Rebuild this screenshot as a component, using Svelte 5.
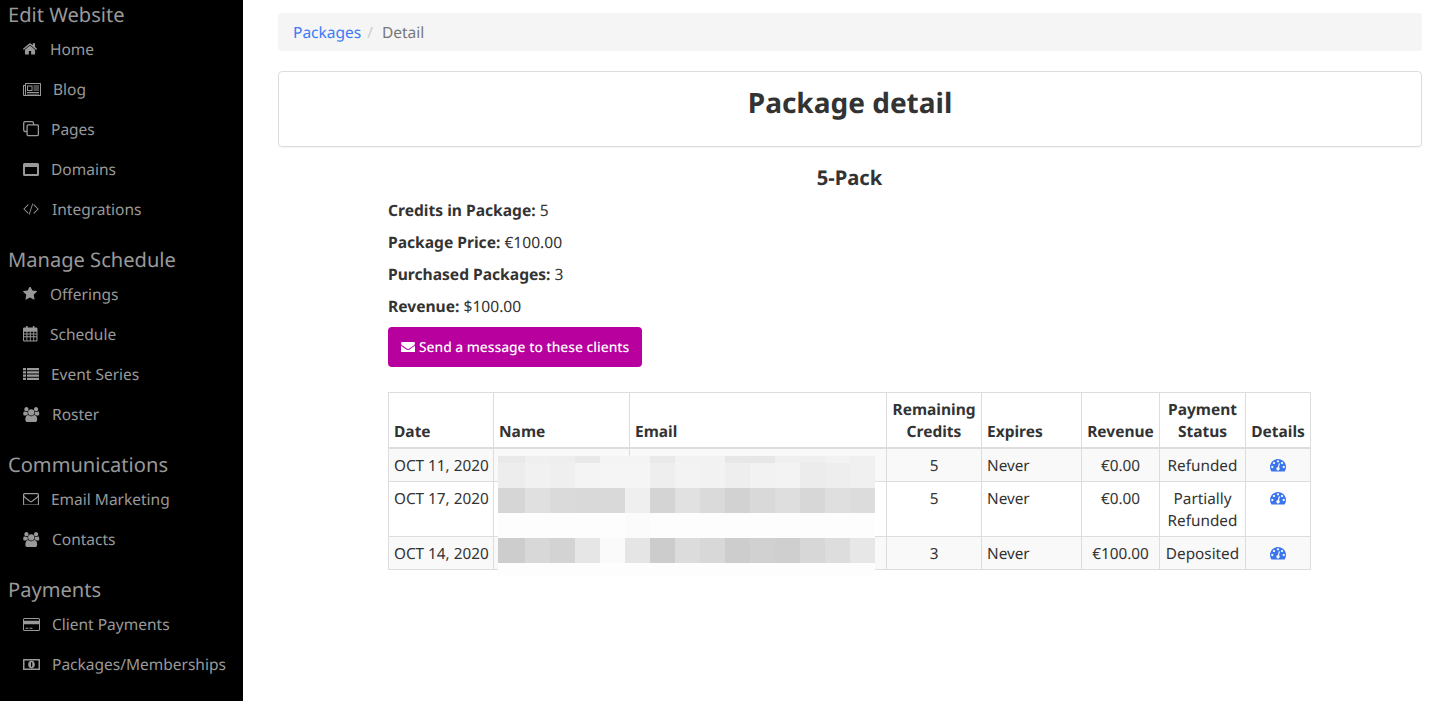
<script>
  const home = "M1472 992v480q0 26-19 45t-45 19h-384v-384h-256v384h-384q-26 0-45-19t-19-45v-480q0-1 .5-3t.5-3l575-474 575 474q1 2 1 6zm223-69l-62 74q-8 9-21 11h-3q-13 0-21-7l-692-577-692 577q-12 8-24 7-13-2-21-11l-62-74q-8-10-7-23.5t11-21.5l719-599q32-26 76-26t76 26l244 204v-195q0-14 9-23t23-9h192q14 0 23 9t9 23v408l219 182q10 8 11 21.5t-7 23.5z";
  const star = "M1728 647q0 22-26 48l-363 354 86 500q1 7 1 20 0 21-10.500 35.500t-30.500 14.500q-19 0-40-12l-449-236-449 236q-22 12-40 12-21 0-31.500-14.500t-10.500-35.500q0-6 2-20l86-500-364-354q-25-27-25-48 0-37 56-46l502-73 225-455q19-41 49-41t49 41l225 455 502 73q56 9 56 46z";
  const envelope = "M1792 710v794q0 66-47 113t-113 47h-1472q-66 0-113-47t-47-113v-794q44 49 101 87 362 246 497 345 57 42 92.500 65.500t94.500 48 110 24.500h2q51 0 110-24.500t94.500-48 92.500-65.500q170-123 498-345 57-39 100-87zm0-294q0 79-49 151t-122 123q-376 261-468 325-10 7-42.500 30.500t-54 38-52 32.500-57.500 27-50 9h-2q-23 0-50-9t-57.500-27-52-32.500-54-38-42.500-30.500q-91-64-262-182.500t-205-142.500q-62-42-117-115.500t-55-136.500q0-78 41.500-130t118.500-52h1472q65 0 112.500 47t47.500 113z";
  const envelopeO = "M1664 1504v-768q-32 36-69 66-268 206-426 338-51 43-83 67t-86.500 48.500-102.500 24.500h-2q-48 0-102.500-24.500t-86.500-48.500-83-67q-158-132-426-338-37-30-69-66v768q0 13 9.500 22.500t22.500 9.500h1472q13 0 22.500-9.500t9.500-22.500zm0-1051v-24.500l-.5-13-3-12.500-5.500-9-9-7.500-14-2.500h-1472q-13 0-22.500 9.500t-9.500 22.500q0 168 147 284 193 152 401 317 6 5 35 29.500t46 37.500 44.500 31.500 50.500 27.500 43 9h2q20 0 43-9t50.500-27.500 44.500-31.500 46-37.500 35-29.500q208-165 401-317 54-43 100.500-115.500t46.500-131.500zm128-37v1088q0 66-47 113t-113 47h-1472q-66 0-113-47t-47-113v-1088q0-66 47-113t113-47h1472q66 0 113 47t47 113z";
  const users = "M593 896q-162 5-265 128h-134q-82 0-138-40.500t-56-118.500q0-353 124-353 6 0 43.500 21t97.500 42.500 119 21.500q67 0 133-23-5 37-5 66 0 139 81 256zm1071 637q0 120-73 189.500t-194 69.500h-874q-121 0-194-69.500t-73-189.500q0-53 3.500-103.500t14-109 26.500-108.500 43-97.500 62-81 85.500-53.500 111.500-20q10 0 43 21.500t73 48 107 48 135 21.500 135-21.500 107-48 73-48 43-21.500q61 0 111.500 20t85.500 53.500 62 81 43 97.500 26.500 108.500 14 109 3.500 103.500zm-1024-1277q0 106-75 181t-181 75-181-75-75-181 75-181 181-75 181 75 75 181zm704 384q0 159-112.500 271.500t-271.500 112.500-271.500-112.500-112.500-271.500 112.500-271.500 271.500-112.500 271.500 112.500 112.500 271.500zm576 225q0 78-56 118.500t-138 40.500h-134q-103-123-265-128 81-117 81-256 0-29-5-66 66 23 133 23 59 0 119-21.500t97.500-42.500 43.500-21q124 0 124 353zm-128-609q0 106-75 181t-181 75-181-75-75-181 75-181 181-75 181 75 75 181z";
  const dashboard = "M384 1152q0-53-37.500-90.500t-90.500-37.500-90.500 37.500-37.500 90.500 37.500 90.500 90.500 37.500 90.500-37.500 37.500-90.500zm192-448q0-53-37.500-90.500t-90.500-37.500-90.500 37.500-37.500 90.500 37.500 90.500 90.500 37.500 90.500-37.500 37.500-90.500zm428 481l101-382q6-26-7.500-48.500t-38.500-29.500-48 6.500-30 39.500l-101 382q-60 5-107 43.500t-63 98.500q-20 77 20 146t117 89 146-20 89-117q16-60-6-117t-72-91zm660-33q0-53-37.500-90.500t-90.500-37.500-90.500 37.500-37.500 90.500 37.500 90.500 90.500 37.500 90.500-37.500 37.500-90.500zm-640-640q0-53-37.500-90.500t-90.500-37.500-90.500 37.500-37.500 90.500 37.500 90.500 90.500 37.500 90.500-37.500 37.500-90.500zm448 192q0-53-37.500-90.500t-90.500-37.500-90.500 37.500-37.500 90.500 37.500 90.500 90.500 37.500 90.500-37.500 37.500-90.500zm320 448q0 261-141 483-19 29-54 29h-1402q-35 0-54-29-141-221-141-483 0-182 71-348t191-286 286-191 348-71 348 71 286 191 191 286 71 348z";

  const paper = "M2.500 0h15a.5.5 0 0 1 .5.5v12a.5.5 0 0 1-.5.5H1.200A1.200 1.200 0 0 1 0 11.800V2h2V.5a.5.5 0 0 1 .5-.5zM3 1v10.500a1 1 0 0 1-.3.5H17V1zM1 3v8.800a.3.3 0 0 0 .6 0L2 11.500V3zM4 2.500h5.500V8H4zM5 3.500V7h3.500V3.500zM10.500 2.500h5.500v1h-5.500zM10.500 4.500h5.500v1h-5.500zM10.500 6.500h5.500v1h-5.500zM4 9h12v1H4zM4 10.700h12v.8H4z";
  const copyS = "M10.500 3.500V2A1.400 1.400 0 0 0 9.100.7H2A1.400 1.400 0 0 0 .7 2v7.100A1.400 1.400 0 0 0 2 10.500h1.500M5.400 3.800h8.700a1.300 1.300 0 0 1 1.300 1.300v8.300a1.300 1.300 0 0 1-1.300 1.300H5.400a1.300 1.300 0 0 1-1.300-1.300V5.100a1.300 1.300 0 0 1 1.300-1.300z";
  const windowMax = "M1.500 0h13A1.500 1.500 0 0 1 16 1.500v10a1.500 1.500 0 0 1-1.500 1.500h-13A1.500 1.500 0 0 1 0 11.500v-10A1.500 1.500 0 0 1 1.500 0zM2 4v7h12V4z";
  const code = "M5 1.300.3 6 5 10.700l.6-.6L1.500 6l4.100-4.100zM9.300.5 5.800 11.500l.8.3L10.100.7zM11 1.300l-.6.6L14.500 6l-4.100 4.100.6.6L15.700 6z";
  const calendar = "M3 0h1.500v1.500h5V0H11v1.500h1.800A1.200 1.200 0 0 1 14 2.700v11.100a1.200 1.200 0 0 1-1.200 1.200H1.200A1.200 1.200 0 0 1 0 13.800V2.700a1.200 1.200 0 0 1 1.200-1.200H3zM1 5.500V7.300h2.300V5.500zM4.200 5.500V7.300h2.400V5.500zM7.500 5.500V7.300h2.400V5.500zM10.800 5.500V7.300H13V5.500zM1 8.200V10h2.300V8.200zM4.200 8.200V10h2.400V8.200zM7.500 8.200V10h2.400V8.200zM10.800 8.200V10H13V8.200zM1 11v2.300c0 .4.3.7.7.7h1.600v-3zM4.200 11v3h2.400v-3zM7.500 11v3h2.400v-3zM10.800 11v3h1.500c.4 0 .7-.3.7-.7V11z";
  const list = "M0 0h3v2.200H0zM4 0h12v2.200H4zM0 3.300h3v2.200H0zM4 3.300h12v2.200H4zM0 6.600h3v2.200H0zM4 6.600h12v2.200H4zM0 9.800h3V12H0zM4 9.800h12V12H4z";
  const card = "M1.500 0h14A1.500 1.500 0 0 1 17 1.500v10a1.500 1.500 0 0 1-1.500 1.500h-14A1.500 1.500 0 0 1 0 11.500v-10A1.500 1.500 0 0 1 1.500 0zM1 6.300v5.200a.5.5 0 0 0 .5.5h14a.5.5 0 0 0 .5-.5V6.300zM1 1.500V2.800h15V1.500a.5.5 0 0 0-.5-.5h-14a.5.5 0 0 0-.5.5zM2.500 9.700h3v1h-3zM6.500 9.700h3v1h-3z";
  const money = "M.5 0h16a.5.5 0 0 1 .5.5v10a.5.5 0 0 1-.5.5H.5a.5.5 0 0 1-.5-.5V.5A.5.5 0 0 1 .5 0zM1.500 1.500v8h14v-8zM8.500 1.700a3.300 3.800 0 1 0 0 7.600 3.300 3.800 0 0 0 0-7.600zM8 3.300h1.200v4.400H8z";

  const sections = [
    { title: "Edit Website", items: [
      { label: "Home", d: home, vb: "97 230 1600 1310", w: 14, h: 11.5, t: 27 },
      { label: "Blog", d: paper, vb: "0 0 18 13", w: 18, h: 13, t: 30 },
      { label: "Pages", s: copyS, vb: "0 0 16 15.500", w: 16, h: 15.5, t: 28 },
      { label: "Domains", d: windowMax, vb: "0 0 16 13", w: 16, h: 13, t: 28 },
      { label: "Integrations", d: code, vb: "0 0 16 12", w: 16, h: 12, t: 29 }
    ]},
    { title: "Manage Schedule", items: [
      { label: "Offerings", d: star, vb: "64 120 1664 1600", w: 14, h: 13.5, t: 27 },
      { label: "Schedule", d: calendar, vb: "0 0 14 15", w: 14.5, h: 15.5, t: 27 },
      { label: "Event Series", d: list, vb: "0 0 16 12", w: 16, h: 12, t: 28 },
      { label: "Roster", d: users, vb: "0 0 1920 1792", w: 16.5, h: 15, t: 29 }
    ]},
    { title: "Communications", items: [
      { label: "Email Marketing", d: envelopeO, vb: "0 256 1792 1280", w: 16, h: 11.5, t: 28 },
      { label: "Contacts", d: users, vb: "0 0 1920 1792", w: 16.5, h: 15, t: 29 }
    ]},
    { title: "Payments", items: [
      { label: "Client Payments", d: card, vb: "0 0 17 13", w: 17, h: 13, t: 29 },
      { label: "Packages/Memberships", d: money, vb: "0 0 17 11", w: 17, h: 11, t: 29 }
    ]}
  ];

  const rows = [
    { date: "OCT 11, 2020", credits: 5, revenue: "€0.00", status: ["Refunded"] },
    { date: "OCT 17, 2020", credits: 5, revenue: "€0.00", status: ["Partially", "Refunded"] },
    { date: "OCT 14, 2020", credits: 3, revenue: "€100.00", status: ["Deposited"] }
  ];

  const mosaic = [
    { h: 7, c: ["e9e9e9","efefef","eeeeee","e8e8e8","f3f3f3","f4f4f4","e9e9e9","f2f2f2","f2f2f2","e7e7e7","e7e7e7","f0f0f0","efefef","f2f2f2","f0f0f0"] },
    { h: 25, c: ["ededed","f1f1f1","efefef","f4f4f4","f5f5f5","f5f5f5","eeeeee","f3f3f3","f2f2f2","eeeeee","f2f2f2","f3f3f3","ececec","eeeeee","f0f0f0"] },
    { h: 25, c: ["d6d6d6","e0e0e0","dadada","d9d9d9","d9d9d9","efefef","d4d4d4","e1e1e1","dadada","d2d2d2","d9d9d9","dedede","d7d7d7","dfdfdf","dcdcdc"] },
    { h: 25, c: ["fdfdfd","fdfdfd","fdfdfd","fdfdfd","fdfdfd","fbfbfb","fdfdfd","fdfdfd","fdfdfd","fdfdfd","fdfdfd","fdfdfd","fdfdfd","fdfdfd","fdfdfd"] },
    { h: 25, c: ["cdcdcd","d8d8d8","d3d3d3","e6e6e6","fafafa","e5e5e5","cccccc","dcdcdc","d8d8d8","cdcdcd","d1d1d1","cfcfcf","d7d7d7","dddddd","e7e7e7"] },
    { h: 12, c: Array(15).fill("fdfdfd") }
  ];
</script>

<div class="app">
  <nav class="side">
    {#each sections as sec}
      <section class="sec">
        <h3>{sec.title}</h3>
        {#each sec.items as it}
          <a class="item" href="#top">
            <span class="ico" style:width="{it.t}px">
              <svg width={it.w} height={it.h} viewBox={it.vb} fill="currentColor" fill-rule="evenodd">
                {#if it.s}
                  <path d={it.s} fill="none" stroke="currentColor" stroke-width="1.300" />
                {:else}
                  <path d={it.d} />
                {/if}
              </svg>
            </span>{it.label}
          </a>
        {/each}
      </section>
    {/each}
  </nav>

  <main class="main">
    <div class="crumb">
      <a href="#top">Packages</a><span class="sep">/</span><span class="cur">Detail</span>
    </div>
    <div class="card"><h1>Package detail</h1></div>
    <div class="inner">
      <h2>5-Pack</h2>
      <p><b>Credits in Package:</b> 5</p>
      <p><b>Package Price:</b> €100.00</p>
      <p><b>Purchased Packages:</b> 3</p>
      <p><b>Revenue:</b> $100.00</p>
      <button class="send">
        <svg width="14" height="10" viewBox="0 256 1792 1280" fill="currentColor"><path d={envelope} /></svg>
        <span class="sendtext">Send a message to these clients</span>
      </button>

      <div class="tablewrap">
        <table>
          <colgroup>
            <col class="c1" /><col class="c2" /><col class="c3" /><col class="c4" />
            <col class="c5" /><col class="c6" /><col class="c7" /><col class="c8" />
          </colgroup>
          <thead>
            <tr>
              <th>Date</th><th>Name</th><th>Email</th>
              <th class="ctr">Remaining Credits</th><th>Expires</th>
              <th class="ctr">Revenue</th><th class="ctr">Payment Status</th><th class="ctr">Details</th>
            </tr>
          </thead>
          <tbody>
            {#each rows as r}
              <tr>
                <td class="date">{r.date}</td><td></td><td></td>
                <td class="ctr">{r.credits}</td><td>Never</td>
                <td class="ctr">{r.revenue}</td>
                <td class="ctr">{#each r.status as s, i}{#if i}<br />{/if}{s}{/each}</td>
                <td class="ctr">
                  <a href="#top" class="dash" aria-label="Details">
                    <svg width="16" height="12.600" viewBox="0 256 1792 1408" fill="currentColor"><path d={dashboard} /></svg>
                  </a>
                </td>
              </tr>
            {/each}
          </tbody>
        </table>
        <div class="mosaic" aria-hidden="true">
          {#each mosaic as m}
            <div class="mrow" style:height="{m.h}px">
              {#each m.c as c}<i style:background="#{c}"></i>{/each}
            </div>
          {/each}
        </div>
      </div>
    </div>
  </main>
</div>

<style>
  :global(body) {
    margin: 0;
    overflow: hidden;
    background: #fff;
    font-family: "Noto Sans", sans-serif;
    font-size: 15.5px;
    line-height: 22px;
    color: #333;
    text-rendering: geometricPrecision;
  }
  .app { display: flex; height: 701px; overflow: hidden; }

  .side { width: 243px; flex: none; background: #000; color: #999; }
  .sec { margin-bottom: 16px; }
  .sec h3 {
    margin: 0;
    padding-left: 8px;
    height: 29px;
    font-size: 20.1px;
    line-height: 29px;
    font-weight: 400;
  }
  .item {
    display: flex;
    align-items: center;
    height: 40px;
    padding-left: 23px;
    color: #999;
    text-decoration: none;
    font-size: 15.5px;
  }
  .ico { display: flex; align-items: center; flex: none; }

  .main { flex: 1; min-width: 0; padding: 13px 17px 0 35px; }
  .crumb {
    display: flex;
    align-items: center;
    height: 38px;
    padding: 0 15px;
    background: #f5f5f5;
    border-radius: 4px;
    font-size: 15.5px;
  }
  .crumb a { color: #3b7bf6; text-decoration: none; }
  .sep { color: #ccc; padding: 0 9px 0 6px; }
  .cur { color: #777; }

  .card {
    margin-top: 20px;
    height: 76px;
    box-sizing: border-box;
    padding-top: 11px;
    border: 1px solid #ddd;
    border-radius: 4px;
    box-shadow: 0 1px 1px rgba(0,0,0,.05);
    text-align: center;
  }
  h1 { margin: 0; font-size: 28px; line-height: 40px; font-weight: 700; color: #333; }

  .inner { width: 923px; margin-left: 110px; }
  h2 { margin: 16px 0 7px; font-size: 20.2px; line-height: 29px; font-weight: 700; text-align: center; }
  p { margin: 0 0 10px; font-size: 15.6px; }

  .send {
    display: flex;
    align-items: center;
    gap: 4px;
    height: 40px;
    padding: 0 13px;
    border: 0;
    border-radius: 4px;
    background: #b8009f;
    color: #fff;
    font: 500 13.8px/22px "Noto Sans", sans-serif;
    text-rendering: geometricPrecision;
  }
  .sendtext { padding-top: 1px; }

  .tablewrap { position: relative; margin-top: 25px; }
  table { width: 923px; table-layout: fixed; border-collapse: collapse; font-size: 15.5px; }
  .c1 { width: 105px; } .c2 { width: 136px; } .c3 { width: 257px; } .c4 { width: 95px; }
  .c5 { width: 100px; } .c6 { width: 78px; } .c7 { width: 86px; } .c8 { width: 65px; }
  th, td { border: 1px solid #ddd; padding: 5px; text-align: left; }
  th { vertical-align: bottom; border-bottom-width: 2px; font-weight: 700; }
  td { font-size: 15.3px; vertical-align: top; padding: 6px 5px 4px; }
  .date { white-space: nowrap; }
  th.ctr, td.ctr { text-align: center; }
  tbody tr:nth-child(odd) { background: #f9f9f9; }
  .dash { color: #3b74f0; display: inline-block; line-height: 0; vertical-align: -1px; }

  .mosaic { position: absolute; left: 110px; top: 64px; width: 377px; }
  .mrow { display: grid; grid-template-columns: 27px repeat(14, 25px); }
  .mrow i { display: block; }
</style>
